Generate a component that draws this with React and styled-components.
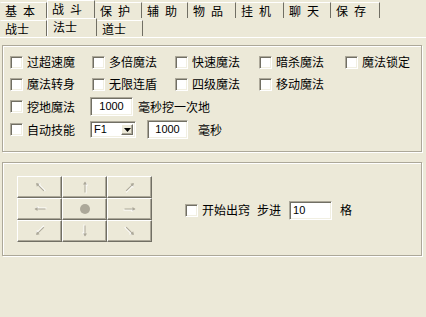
import React from 'react'
import styled, { createGlobalStyle } from 'styled-components'

const Global = createGlobalStyle`
  html, body {
    margin: 0;
    padding: 0;
    background: #ece9d8;
  }
  body {
    font-family: "Noto Sans CJK SC", "DejaVu Sans", sans-serif;
    font-size: 12px;
    color: #000;
  }
`

const Page = styled.div`
  width: 426px;
  height: 317px;
  overflow: hidden;
  background: #ece9d8;
`

const TabRow = styled.div`
  display: flex;
  align-items: flex-end;
  height: 18px;
`

const Tab = styled.div`
  box-sizing: border-box;
  width: ${p => p.$w}px;
  height: ${p => (p.$active ? 18 : 16)}px;
  border-top: 1px solid #fff;
  border-left: 1px solid ${p => (p.$active ? '#fff' : 'transparent')};
  border-right: 1px solid #716f64;
  padding-left: ${p => p.$pad}px;
  line-height: 16px;
  letter-spacing: ${p => (p.$spaced ? 6 : 0)}px;
  white-space: nowrap;
`

const Sheet = styled.div`
  margin-top: 1px;
  border-top: 1px solid #fff;
  padding-top: 7px;
  display: flex;
  flex-direction: column;
  gap: 10px;
`

const Group = styled.div`
  box-sizing: border-box;
  margin-left: 2px;
  width: 420px;
  height: ${p => p.$h}px;
  border: 1px solid #aca899;
  box-shadow: inset 1px 1px #fff, 1px 1px #fff;
  padding: ${p => p.$pad};
`

const CheckGrid = styled.div`
  display: grid;
  grid-template-columns: 82px 83px 84px 86px auto;
  grid-auto-rows: 22px;
  align-items: center;
`

const Line = styled.div`
  display: flex;
  align-items: center;
  height: 23px;
`

const Label = styled.label`
  display: flex;
  align-items: center;
  line-height: 14px;
  white-space: nowrap;
`

const Box = styled.span`
  box-sizing: border-box;
  width: 13px;
  height: 13px;
  margin-right: 4px;
  background: #fff;
  border: 1px solid;
  border-color: #aca899 #fff #fff #aca899;
  box-shadow: inset 1px 1px #716f64, inset -1px -1px #f1efe2;
  flex: none;
`

const Text = styled.span`
  margin-left: ${p => p.$ml || 0}px;
  line-height: 14px;
  white-space: nowrap;
`

const Field = styled.div`
  box-sizing: border-box;
  width: ${p => p.$w}px;
  height: ${p => p.$h || 19}px;
  margin-left: ${p => p.$ml || 0}px;
  background: #fff;
  border: 1px solid;
  border-color: #aca899 #fff #fff #aca899;
  box-shadow: inset 1px 1px #716f64, inset -1px -1px #f1efe2;
  font-family: "Liberation Sans", sans-serif;
  font-size: 11px;
  line-height: ${p => (p.$h || 19) - 2}px;
  text-align: ${p => p.$align || 'center'};
  padding-left: ${p => (p.$align === 'left' ? 3 : 0)}px;
  display: flex;
  align-items: stretch;
  justify-content: space-between;
`

const FieldValue = styled.span`
  flex: 1;
`

const DropBtn = styled.span`
  box-sizing: border-box;
  width: 12px;
  margin: 2px 2px 2px 0;
  background: #ece9d8;
  border: 1px solid;
  border-color: #fff #716f64 #716f64 #fff;
  box-shadow: inset -1px -1px #aca899;
  display: flex;
  align-items: center;
  justify-content: center;
`

const Pad = styled.div`
  display: grid;
  grid-template-columns: repeat(3, 45px);
  grid-template-rows: repeat(3, 22px);
  flex: none;
`

const PadBtn = styled.div`
  box-sizing: border-box;
  background: #ece9d8;
  border: 1px solid;
  border-color: #fff #716f64 #716f64 #fff;
  box-shadow: inset -1px -1px #aca899;
  display: flex;
  align-items: center;
  justify-content: center;
`

const ArrowSvg = styled.svg`
  transform: rotate(${p => p.$deg}deg);
`

const Dot = styled.span`
  width: 10px;
  height: 10px;
  border-radius: 50%;
  background: #aca899;
`

const MoveRow = styled.div`
  display: flex;
  align-items: center;
`

const Side = styled.div`
  display: flex;
  align-items: center;
  margin-left: 33px;
  margin-top: 2px;
`

function Arrow({ deg }) {
  return (
    <ArrowSvg $deg={deg} width="14" height="14" viewBox="0 0 14 14">
      <g stroke="#fff" fill="#fff" transform="translate(1 1)">
        <line x1="7" y1="12.5" x2="7" y2="2.5" />
        <path d="M5 4.5 L7 1.5 L9 4.5 Z" stroke="none" />
      </g>
      <g stroke="#aca899" fill="#aca899">
        <line x1="7" y1="12.5" x2="7" y2="2.5" />
        <path d="M5 4.5 L7 1.5 L9 4.5 Z" stroke="none" />
      </g>
    </ArrowSvg>
  )
}

function Check({ label }) {
  return (
    <Label>
      <Box />
      {label}
    </Label>
  )
}

const mainTabs = [
  ['基本', 47],
  ['战斗', 48, true],
  ['保护', 47],
  ['辅助', 46],
  ['物品', 48],
  ['挂机', 48],
  ['聊天', 47],
  ['保存', 49],
]

const subTabs = [
  ['战士', 47],
  ['法士', 50, true],
  ['道士', 46],
]

const pad = [-45, 0, 45, -90, null, 90, -135, 180, 135]

export default function App() {
  return (
    <Page>
      <Global />
      <TabRow>
        {mainTabs.map(([t, w, a]) => (
          <Tab key={t} $w={w} $active={a} $pad={4} $spaced>
            {t}
          </Tab>
        ))}
      </TabRow>
      <TabRow>
        {subTabs.map(([t, w, a]) => (
          <Tab key={t} $w={w} $active={a} $pad={a ? 5 : 4}>
            {t}
          </Tab>
        ))}
      </TabRow>
      <Sheet>
        <Group $h={107} $pad="5px 0 0 7px">
          <CheckGrid>
            <Check label="过超速魔" />
            <Check label="多倍魔法" />
            <Check label="快速魔法" />
            <Check label="暗杀魔法" />
            <Check label="魔法锁定" />
            <Check label="魔法转身" />
            <Check label="无限连盾" />
            <Check label="四级魔法" />
            <Check label="移动魔法" />
          </CheckGrid>
          <Line>
            <Check label="挖地魔法" />
            <Field $w={43} $ml={15}>
              <FieldValue>1000</FieldValue>
            </Field>
            <Text $ml={5}>毫秒挖一次地</Text>
          </Line>
          <Line>
            <Check label="自动技能" />
            <Field $w={46} $h={17} $ml={15} $align="left">
              <FieldValue>F1</FieldValue>
              <DropBtn>
                <svg width="7" height="4" viewBox="0 0 7 4">
                  <path d="M0 0 H7 L3.5 4 Z" fill="#000" />
                </svg>
              </DropBtn>
            </Field>
            <Field $w={41} $ml={11}>
              <FieldValue>1000</FieldValue>
            </Field>
            <Text $ml={10}>毫秒</Text>
          </Line>
        </Group>
        <Group $h={94} $pad="13px 0 0 14px">
          <MoveRow>
            <Pad>
              {pad.map((d, i) => (
                <PadBtn key={i}>{d === null ? <Dot /> : <Arrow deg={d} />}</PadBtn>
              ))}
            </Pad>
            <Side>
              <Check label="开始出窍" />
              <Text $ml={7}>步进</Text>
              <Field $w={43} $ml={8} $align="left">
                <FieldValue>10</FieldValue>
              </Field>
              <Text $ml={8}>格</Text>
            </Side>
          </MoveRow>
        </Group>
      </Sheet>
    </Page>
  )
}
